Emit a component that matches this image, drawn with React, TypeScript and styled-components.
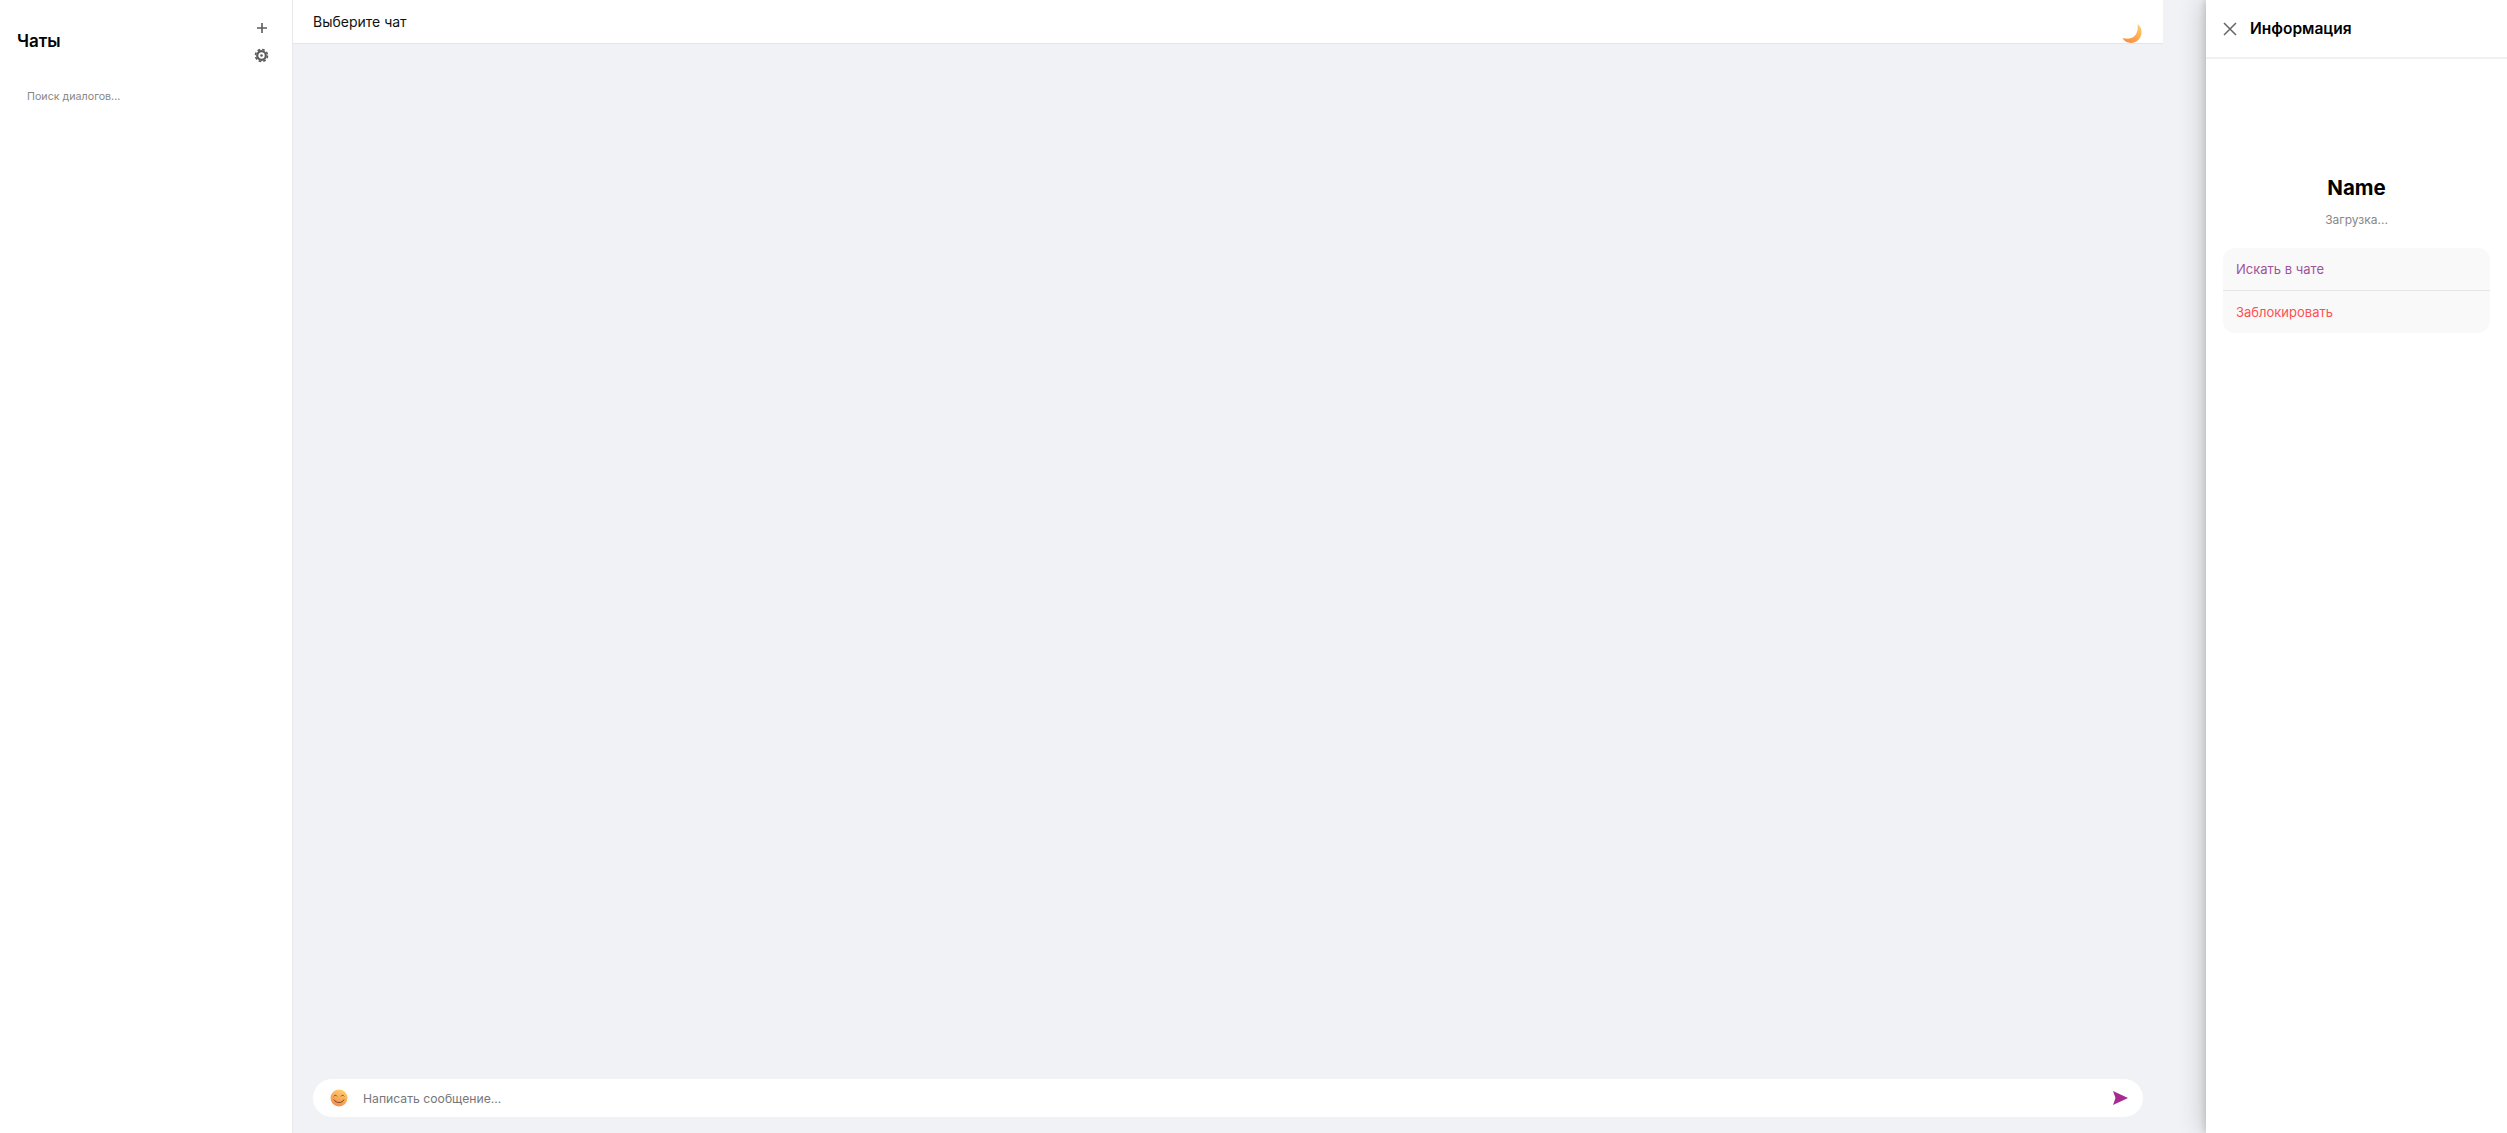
import React from 'react'
import styled, { createGlobalStyle } from 'styled-components'

const Global = createGlobalStyle`
  html, body {
    margin: 0;
    padding: 0;
    height: 100%;
    background: #f0f2f5;
    font-family: Inter, "Noto Sans", sans-serif;
  }
  #root { height: 100%; }
`

const APP = styled.div`
  display: flex;
  height: 1133px;
  overflow: hidden;
  position: relative;
`

const Sidebar = styled.aside`
  width: 292px;
  flex: none;
  background: #fff;
  border-right: 1px solid #e8e8ec;
`

const SideHead = styled.div`
  display: flex;
  justify-content: space-between;
  align-items: center;
  height: 82px;
  padding: 0 23px 0 17px;
`

const Title = styled.h2`
  margin: 0 0 1px;
  font-size: 17px;
  font-weight: 600;
  color: #000;
`

const Tools = styled.div`
  display: flex;
  flex-direction: column;
  align-items: center;
  gap: 14px;
  margin-top: 2px;
  color: #5c5c5c;
`

const ToolButton = styled.button`
  display: flex;
  padding: 0;
  border: 0;
  background: none;
  color: inherit;
`

const Search = styled.div`
  padding: 7px 27px;
  font-size: 10.7px;
  line-height: 15px;
  color: #888;
`

const Chat = styled.main`
  width: 1870px;
  flex: none;
  display: flex;
  flex-direction: column;
  justify-content: space-between;
`

const ChatHead = styled.header`
  display: flex;
  justify-content: space-between;
  height: 44px;
  box-sizing: border-box;
  padding: 0 21px 0 20px;
  background: #fff;
  border-bottom: 1px solid #e4e5e9;
  font-size: 14px;
  line-height: 43px;
  color: #111;
`

const Moon = styled.svg`
  width: 20px;
  height: 21px;
  align-self: flex-end;
`

const Composer = styled.div`
  display: flex;
  align-items: center;
  height: 38px;
  margin: 0 20px 16px;
  padding: 0 15px 0 17px;
  background: #fff;
  border-radius: 19px;
`

const Placeholder = styled.span`
  flex: 1;
  margin-left: 15px;
  font-size: 12.2px;
  color: #777;
`

const Panel = styled.section`
  position: absolute;
  top: 0;
  right: 0;
  bottom: 0;
  width: 301px;
  background: #fff;
  box-shadow: -2px 0 6px rgba(0, 0, 0, 0.12), -4px 0 24px rgba(0, 0, 0, 0.16);
`

const PanelHead = styled.div`
  display: flex;
  align-items: center;
  gap: 13px;
  height: 57px;
  padding: 0 17px;
  border-bottom: 2px solid #f0f0f2;
  font-size: 15.5px;
  font-weight: 600;
  color: #000;
`

const Name = styled.div`
  margin-top: 114px;
  text-align: center;
  font-size: 20.5px;
  line-height: 30px;
  font-weight: 700;
  color: #000;
`

const Status = styled.div`
  margin-top: 9px;
  text-align: center;
  font-size: 12px;
  line-height: 16px;
  color: #888;
`

const Menu = styled.div`
  margin: 20px 17px 0;
  background: #f9f9f9;
  border-radius: 12px;
`

const MenuItem = styled.div<{ $danger?: boolean }>`
  height: 42px;
  padding: 0 13px;
  font-size: 13px;
  line-height: 42px;
  color: ${p => (p.$danger ? '#ff5050' : '#a0529c')};
  & + & { border-top: 1px solid #e6e6e8; }
`

export default function App() {
  return (
    <APP>
      <Global />
      <Sidebar>
        <SideHead>
          <Title>Чаты</Title>
          <Tools>
            <ToolButton>
              <svg width="12" height="12" viewBox="0 0 12 12"><path d="M6 1v10M1 6h10" stroke="currentColor" strokeWidth="1.6" /></svg>
            </ToolButton>
            <ToolButton>
              <svg width="15" height="15" viewBox="0 0 15 15">
                <circle cx="7.5" cy="7.500" r="4.300" fill="none" stroke="currentColor" strokeWidth="2.200" />
                <circle cx="7.5" cy="7.500" r="6" fill="none" stroke="currentColor" strokeWidth="1.600" strokeDasharray="2.700 2" />
                <circle cx="7.5" cy="7.500" r="1.300" fill="currentColor" />
              </svg>
            </ToolButton>
          </Tools>
        </SideHead>
        <Search>Поиск диалогов...</Search>
      </Sidebar>
      <Chat>
        <ChatHead>
          Выберите чат
          <Moon viewBox="0 0 20 21">
            <defs>
              <linearGradient id="moon" x1="0.8" y1="0" x2="0.3" y2="1">
                <stop offset="0" stopColor="#fbcf6a" />
                <stop offset="1" stopColor="#f98f3e" />
              </linearGradient>
            </defs>
            <path d="M15.500 2C19 4.500 20.500 9 19 13.500 17.500 18.500 12.500 21.500 7.500 20.800 4.300 20.300 1.800 18.600 0.500 16 5 17.500 10 16.800 13 13.500 15.500 10.500 16.300 6 15.500 2z" fill="url(#moon)" />
          </Moon>
        </ChatHead>
        <Composer>
          <svg width="18" height="18" viewBox="0 0 18 18">
            <defs>
              <linearGradient id="face" x1="0.7" y1="0" x2="0.3" y2="1">
                <stop offset="0" stopColor="#fcd06c" />
                <stop offset="1" stopColor="#f68a4a" />
              </linearGradient>
            </defs>
            <circle cx="9" cy="9" r="8.500" fill="url(#face)" />
            <path d="M3.800 7.300c.8-1.300 2.400-1.300 3.200 0M11 7.300c.8-1.300 2.400-1.300 3.200 0" stroke="#7a4a30" strokeWidth="1" fill="none" />
            <path d="M4 10.500c1.500 4 8.500 4 10 0" stroke="#7a4a30" strokeWidth="1" fill="none" />
          </svg>
          <Placeholder>Написать сообщение...</Placeholder>
          <svg width="15" height="14" viewBox="0 0 15 14"><path d="M0 0l15 7-15 7 2.500-7z" fill="#a62a8f" /></svg>
        </Composer>
      </Chat>
      <Panel>
        <PanelHead>
          <svg width="14" height="14" viewBox="0 0 14 14"><path d="M1 1l12 12M13 1L1 13" stroke="#666" strokeWidth="1.500" /></svg>
          Информация
        </PanelHead>
        <Name>Name</Name>
        <Status>Загрузка...</Status>
        <Menu>
          <MenuItem>Искать в чате</MenuItem>
          <MenuItem $danger>Заблокировать</MenuItem>
        </Menu>
      </Panel>
    </APP>
  )
}
